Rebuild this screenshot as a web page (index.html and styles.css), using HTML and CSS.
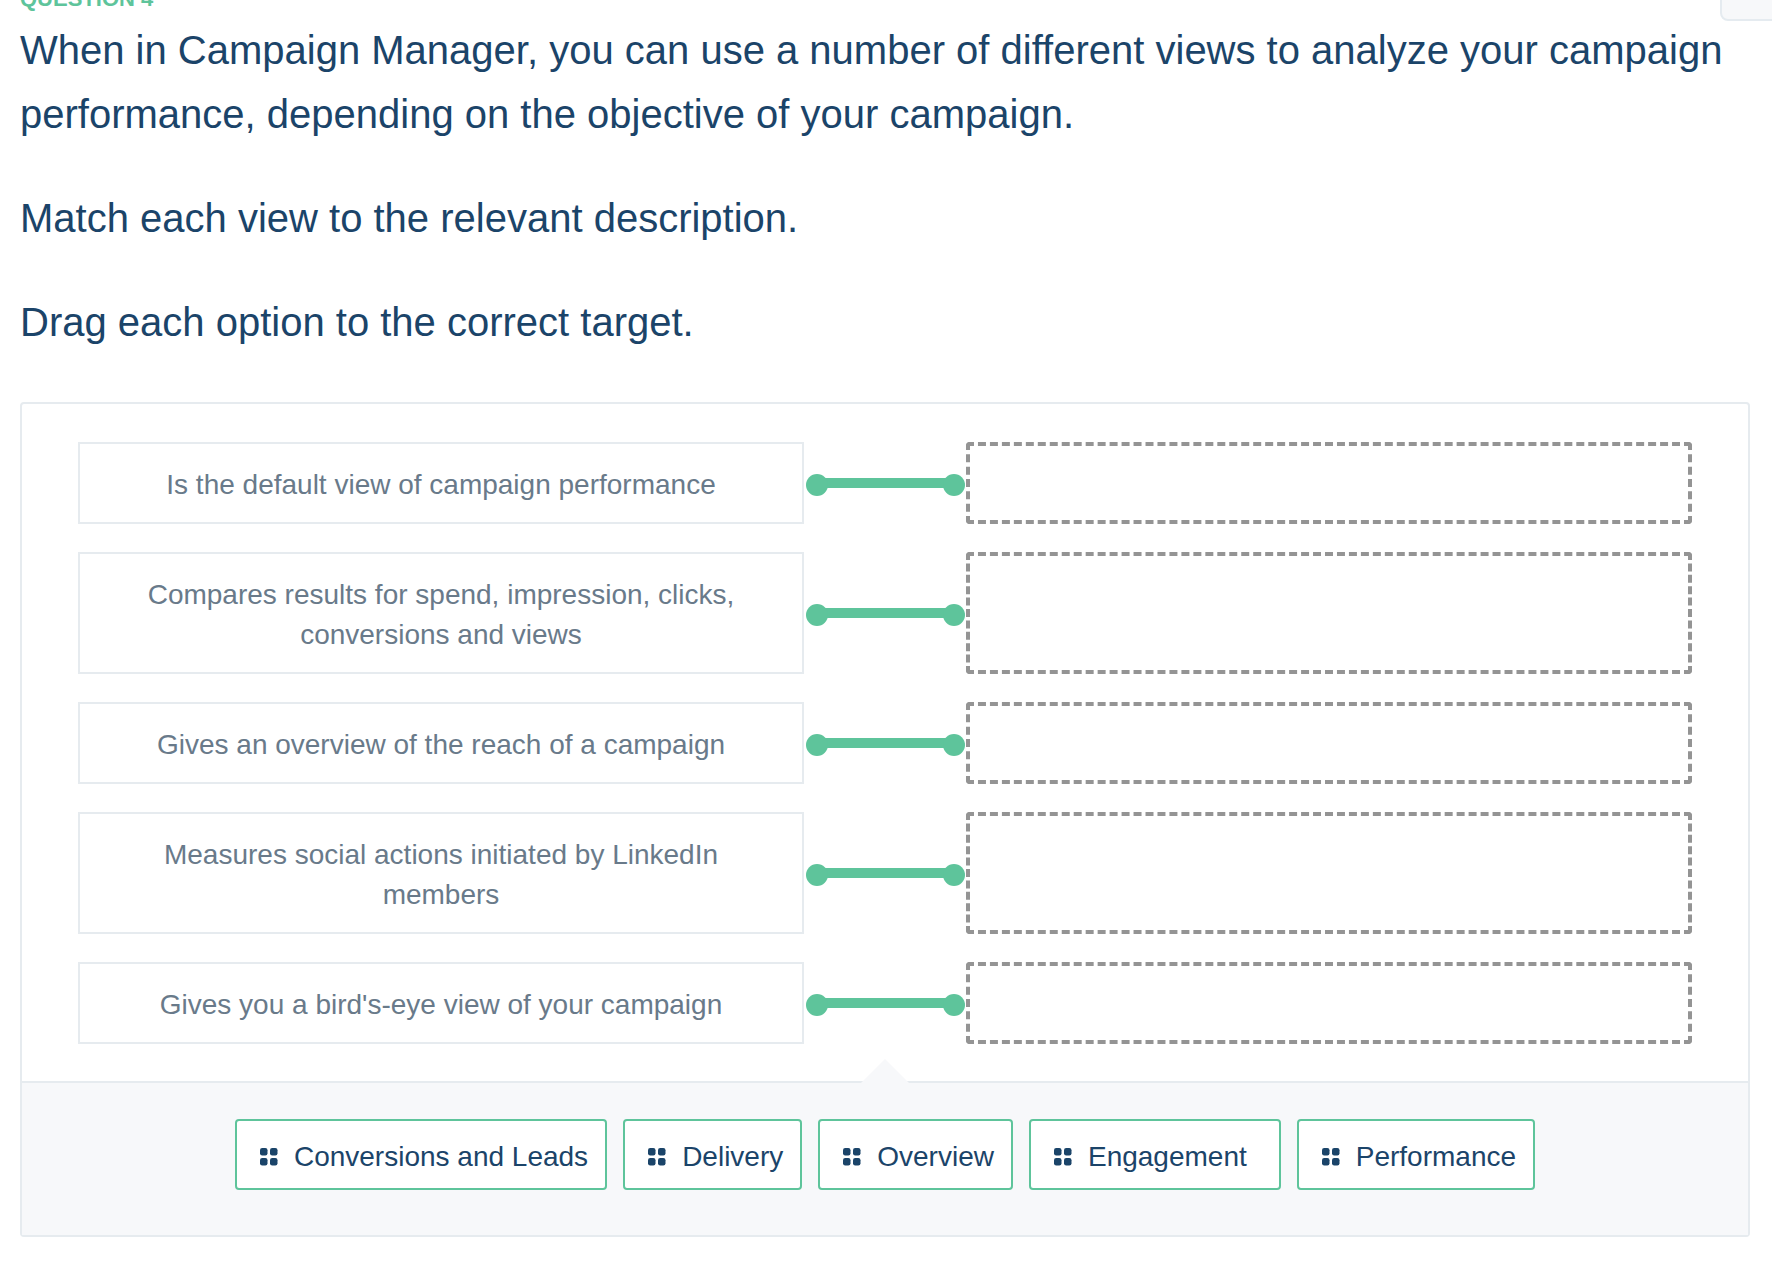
FILE: index.html
```html
<!DOCTYPE html>
<html lang="en">
<head>
  <meta charset="UTF-8">
  <title>Question 4</title>
  <link rel="stylesheet" href="styles.css">
</head>
<body>

  <svg class="sprite" aria-hidden="true">
    <symbol id="grip" viewBox="0 0 18 18">
      <rect x="0" y="0" width="7.5" height="7.5" rx="2.2"/>
      <rect x="10" y="0" width="7.5" height="7.5" rx="2.2"/>
      <rect x="0" y="10" width="7.5" height="7.5" rx="2.2"/>
      <rect x="10" y="10" width="7.5" height="7.5" rx="2.2"/>
    </symbol>
  </svg>

  <button class="corner-btn" type="button" aria-label="Options"></button>

  <main>
    <h2 class="label">QUESTION 4</h2>
    <div class="prompt">
      <p>When in Campaign Manager, you can use a number of different views to analyze your campaign performance, depending on the objective of your campaign.</p>
      <p>Match each view to the relevant description.</p>
      <p>Drag each option to the correct target.</p>
    </div>

    <section class="panel">
      <ul class="rows">
        <li class="row">
          <div class="desc">Is the default view of campaign performance</div>
          <div class="link"></div>
          <div class="target"></div>
        </li>
        <li class="row">
          <div class="desc">Compares results for spend, impression, clicks, conversions and views</div>
          <div class="link"></div>
          <div class="target"></div>
        </li>
        <li class="row">
          <div class="desc">Gives an overview of the reach of a campaign</div>
          <div class="link"></div>
          <div class="target"></div>
        </li>
        <li class="row">
          <div class="desc">Measures social actions initiated by LinkedIn members</div>
          <div class="link"></div>
          <div class="target"></div>
        </li>
        <li class="row">
          <div class="desc">Gives you a bird's-eye view of your campaign</div>
          <div class="link"></div>
          <div class="target"></div>
        </li>
      </ul>

      <!-- draggable options -->
      <div class="bank">
        <button class="chip" type="button"><svg class="grip"><use href="#grip"/></svg>Conversions and Leads</button>
        <button class="chip" type="button"><svg class="grip"><use href="#grip"/></svg>Delivery</button>
        <button class="chip" type="button"><svg class="grip"><use href="#grip"/></svg>Overview</button>
        <button class="chip chip-wide" type="button"><svg class="grip"><use href="#grip"/></svg>Engagement</button>
        <button class="chip" type="button"><svg class="grip"><use href="#grip"/></svg>Performance</button>
      </div>
    </section>
  </main>

</body>
</html>
```

FILE: styles.css
```css
* {
  box-sizing: border-box;
}

body {
  margin: 0;
  background: #fff;
  color: #1b4469;
  font-family: "Liberation Sans", Arial, sans-serif;
  overflow-x: hidden;
}

main {
  padding: 0 22px 39px 20px;
}

.sprite {
  display: none;
}

.corner-btn {
  position: absolute;
  top: -43px;
  right: -12px;
  width: 64px;
  height: 64px;
  border: 2px solid #e5ebf0;
  border-radius: 8px;
  background: #f7f8fa;
}

.label {
  margin: -15px 0 5px;
  color: #5ec49b;
  font-size: 22px;
  line-height: 28px;
  font-weight: 700;
}

.prompt {
  font-size: 40px;
  line-height: 64px;
}

.prompt p {
  margin: 0 0 40px;
}

.prompt p:last-child {
  margin-bottom: 48px;
}

.panel {
  border: 2px solid #e6ebef;
  border-radius: 4px;
}

.rows {
  display: flex;
  flex-direction: column;
  gap: 28px;
  margin: 0;
  padding: 38px 56px 37px;
  list-style: none;
}

.row {
  display: grid;
  grid-template-columns: 1fr 162px 1fr;
}

.desc {
  padding: 21px 38px 17px;
  border: 2px solid #e6ebef;
  color: #697a8a;
  font-size: 28px;
  line-height: 40px;
  text-align: center;
}

.link {
  position: relative;
  align-self: center;
  height: 10px;
  margin: 0 12px;
  background: #5ec49b;
}

.link::before,
.link::after {
  content: "";
  position: absolute;
  top: -4px;
  width: 22px;
  height: 22px;
  border-radius: 50%;
  background: #5ec49b;
}

.link::before {
  left: -10px;
}

.link::after {
  right: -11px;
}

.target {
  border: 4px dashed #949494;
  border-radius: 4px;
}

.bank {
  position: relative;
  display: flex;
  justify-content: center;
  gap: 16px;
  padding: 36px 0 45px;
  border-top: 2px solid #e6ebef;
  background: #f7f8fa;
}

/* notch over the divider */
.bank::before {
  content: "";
  position: absolute;
  top: -24px;
  left: 50%;
  margin-left: -24px;
  border: 24px solid transparent;
  border-top: 0;
  border-bottom-color: #f7f8fa;
}

.chip {
  display: flex;
  align-items: center;
  gap: 16px;
  height: 71px;
  padding: 4px 17px 0 23px;
  border: 2px solid #5ec49b;
  border-radius: 4px;
  background: #fff;
  color: #1b4469;
  font-family: inherit;
  font-size: 28px;
}

.chip-wide {
  padding-right: 32px;
}

.grip {
  width: 18px;
  height: 18px;
  fill: #1b4469;
}
```
